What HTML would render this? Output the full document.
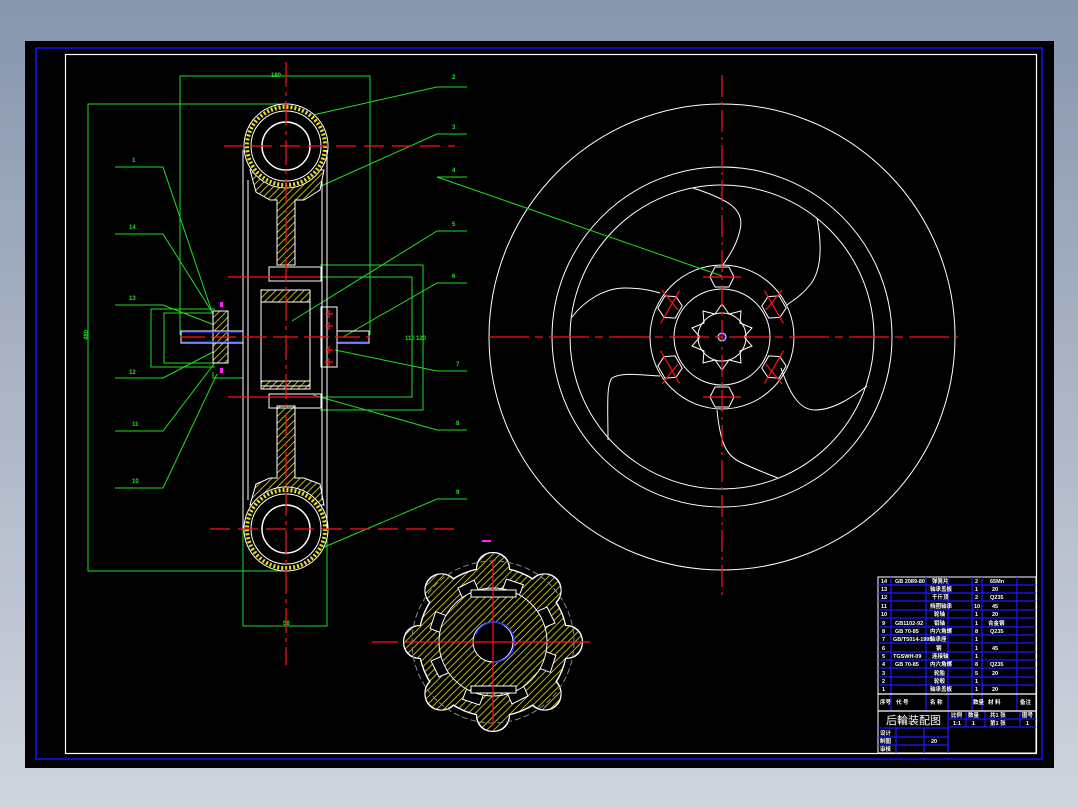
<!DOCTYPE html>
<html><head><meta charset="utf-8"><style>
html,body{margin:0;padding:0;}
body{width:1078px;height:808px;overflow:hidden;background:linear-gradient(#8796ad,#b4bccb 60%,#d0d4de);position:relative;font-family:"Liberation Sans","Noto Sans CJK SC",sans-serif;}
svg{position:absolute;left:0;top:0;}
</style></head><body>
<svg width="1078" height="808" viewBox="0 0 1078 808" xmlns="http://www.w3.org/2000/svg">
<defs>
<pattern id="h" width="5" height="5" patternUnits="userSpaceOnUse" patternTransform="rotate(45)">
<rect width="5" height="5" fill="#000"/><line x1="0" y1="0" x2="0" y2="5" stroke="#e8e020" stroke-width="1.6"/>
</pattern>
<filter id="ol" x="-10%" y="-10%" width="120%" height="120%">
<feMorphology operator="dilate" radius="1" in="SourceAlpha" result="d"/>
<feFlood flood-color="#fff" result="f"/>
<feComposite in="f" in2="d" operator="in" result="o"/>
<feMerge><feMergeNode in="o"/><feMergeNode in="SourceGraphic"/></feMerge>
</filter>
</defs>
<rect x="25" y="41" width="1029" height="727" fill="#000"/>
<rect x="36" y="48" width="1006" height="711" fill="none" stroke="#1010ff" stroke-width="1.5"/>
<rect x="65.5" y="54.5" width="971" height="699" fill="none" stroke="#fff" stroke-width="1.2"/>

<!-- ===== wheel ===== -->
<g fill="none" stroke="#fff" stroke-width="1">
<circle cx="722" cy="337" r="233"/>
<circle cx="722" cy="337" r="170"/>
<circle cx="722" cy="337" r="152"/>
<circle cx="722" cy="337" r="72"/>
<circle cx="722" cy="337" r="48"/>
<circle cx="722" cy="337" r="24"/>
<path d="M693,188 C730,200 745,210 740,230 C737,245 728,258 722,266"/>
<path d="M817,218 C822,245 822,270 810,285 C800,297 793,300 787,305"/>
<path d="M781,368 C790,395 800,410 815,410 C835,410 855,395 867,386"/>
<path d="M717,410 C720,440 725,455 740,462 C752,468 765,473 778,478"/>
<path d="M660,376 C640,375 622,372 612,378 C606,385 608,410 608,440"/>
<path d="M572,317 C585,300 605,288 625,288 C640,288 650,290 660,293"/>
<path d="M722,304 L729,314 L741,311 L740,323 L752,328 L744,337 L752,346 L740,351 L741,363 L729,360 L722,370 L715,360 L703,363 L704,351 L692,346 L700,337 L692,328 L704,323 L703,311 L715,314 Z"/>
<circle cx="722" cy="337" r="4"/>
<g id="hx"><polygon points="715,267 729,267 734,277 729,287 715,287 710,277"/></g>
<use href="#hx" transform="rotate(60 722 337)"/><use href="#hx" transform="rotate(120 722 337)"/>
<use href="#hx" transform="rotate(180 722 337)"/><use href="#hx" transform="rotate(240 722 337)"/>
<use href="#hx" transform="rotate(300 722 337)"/>
</g>
<circle cx="722" cy="337" r="3" fill="none" stroke="#2030ff"/>
<g stroke="#ff1010" stroke-width="1.2" fill="none">
<line x1="722" y1="75" x2="722" y2="600" stroke-dasharray="22,5,3,5"/>
<line x1="489" y1="337" x2="958" y2="337" stroke-dasharray="40,6,8,6"/>
<g id="rx"><line x1="703" y1="277" x2="741" y2="277"/></g>
<use href="#rx" transform="rotate(60 722 337)"/><use href="#rx" transform="rotate(120 722 337)"/>
<use href="#rx" transform="rotate(180 722 337)"/><use href="#rx" transform="rotate(240 722 337)"/>
<use href="#rx" transform="rotate(300 722 337)"/>
<line x1="662" y1="290" x2="678" y2="310"/><line x1="782" y1="290" x2="766" y2="310"/>
<line x1="662" y1="384" x2="678" y2="364"/><line x1="782" y1="384" x2="766" y2="364"/>
</g>

<!-- ===== left assembly ===== -->
<g fill="none" stroke="#20e020" stroke-width="1">
<path d="M180,335 V76 H370 V335"/>
<path d="M290,104 H88 V571 H290"/>
<path d="M243,529 V626 H327 V529"/>
<path d="M320,265 H423 V410 H320"/>
<path d="M320,277 H412 V397 H320"/>
<path d="M215,309 H151 V367 H215"/>
<path d="M215,313 H164 V363 H215"/>
<path d="M213,372 V378 H243"/>
<path d="M467,87 H437 L313,115"/>
<path d="M467,134 H437 L310,191"/>
<path d="M467,177 H437 L722,276"/>
<path d="M467,231 H437 L292,321"/>
<path d="M467,283 H437 L343,337"/>
<path d="M467,371 H437 L335,350"/>
<path d="M467,430 H437 L313,395"/>
<path d="M467,499 H437 L322,548"/>
<path d="M115,167 H163 L213,315"/>
<path d="M115,234 H163 L212,312"/>
<path d="M115,305 H163 L217,326"/>
<path d="M115,378 H163 L213,352"/>
<path d="M115,431 H163 L220,356"/>
<path d="M115,488 H163 L217,374"/>
</g>
<g fill="#20e020" font-size="6" font-weight="bold">
<text x="452" y="79">2</text><text x="452" y="129">3</text><text x="452" y="172">4</text>
<text x="452" y="226">5</text><text x="452" y="278">6</text><text x="456" y="366">7</text>
<text x="456" y="425">8</text><text x="456" y="494">9</text>
<text x="132" y="162">1</text><text x="129" y="229">14</text><text x="129" y="300">13</text>
<text x="129" y="374">12</text><text x="132" y="426">11</text><text x="132" y="483">10</text>
<text x="271" y="77">180</text><text x="283" y="625">58</text>
<text x="84" y="340" transform="rotate(-90 86 338)">480</text>
<text x="405" y="340">110</text><text x="416" y="340">120</text>
</g>
<g fill="url(#h)" stroke="#fff" stroke-width="1">
<path d="M250,170 L256,192 L270,200 L277,200 L277,265 L295,265 L295,200 L304,200 L320,190 L324,170 Z"/>
<path d="M250,505 L256,484 L270,478 L277,478 L277,406 L295,406 L295,478 L304,478 L320,484 L324,505 Z"/>
<rect x="261" y="290" width="49" height="12"/>
<rect x="261" y="381" width="49" height="8"/>
<rect x="213" y="311" width="15" height="52"/>
</g>
<g fill="#000" stroke="#fff" stroke-width="1">
<circle cx="286" cy="146" r="42"/>
<circle cx="286" cy="529" r="42"/>
</g>
<g fill="none">
<circle cx="286" cy="146" r="39" stroke="#e8e020" stroke-width="4" stroke-dasharray="2,2"/>
<circle cx="286" cy="529" r="39" stroke="#e8e020" stroke-width="4" stroke-dasharray="2,2"/>
<circle cx="286" cy="146" r="35" stroke="#fff"/><circle cx="286" cy="529" r="35" stroke="#fff"/>
<circle cx="286" cy="146" r="24" stroke="#fff" stroke-width="1.5"/>
<circle cx="286" cy="529" r="24" stroke="#fff" stroke-width="1.5"/>
</g>
<g fill="none" stroke="#fff" stroke-width="1">
<line x1="243" y1="150" x2="243" y2="529"/><line x1="327" y1="150" x2="327" y2="529"/>
<line x1="248" y1="180" x2="248" y2="500"/><line x1="322" y1="180" x2="322" y2="500"/>
<rect x="261" y="290" width="49" height="96"/>
<rect x="321" y="307" width="16" height="60"/>
<rect x="181" y="331" width="62" height="12"/>
<rect x="337" y="331" width="32" height="12"/>
<rect x="269" y="267" width="52" height="14"/><rect x="269" y="394" width="52" height="14"/>
</g>
<g stroke="#2030ff" stroke-width="1.2">
<line x1="182" y1="332" x2="242" y2="332"/><line x1="182" y1="342" x2="242" y2="342"/>
<line x1="338" y1="342" x2="368" y2="342"/>
</g>
<g stroke="#ff1010" stroke-width="1.2" fill="none">
<line x1="286" y1="62" x2="286" y2="665" stroke-dasharray="25,5,4,5"/>
<line x1="224" y1="146" x2="455" y2="146" stroke-dasharray="20,8"/>
<line x1="210" y1="529" x2="455" y2="529" stroke-dasharray="20,8"/>
<line x1="180" y1="337" x2="370" y2="337" stroke-dasharray="25,6"/>
<line x1="228" y1="277" x2="320" y2="277"/><line x1="228" y1="397" x2="320" y2="397"/>
<path d="M325,314 h8 M329,310 v8 M325,326 h8 M329,322 v8 M325,350 h8 M329,346 v8 M325,362 h8 M329,358 v8"/>
</g>
<rect x="220" y="302" width="3" height="5" fill="#ff20ff"/><rect x="220" y="368" width="3" height="5" fill="#ff20ff"/>

<!-- ===== bottom gear ===== -->
<g filter="url(#ol)">
<g fill="url(#h)">
<circle cx="493" cy="642" r="74"/>
<circle cx="493" cy="569" r="16"/><circle cx="544.6" cy="590.4" r="16"/>
<circle cx="566" cy="642" r="16"/><circle cx="544.6" cy="693.6" r="16"/>
<circle cx="493" cy="715" r="16"/><circle cx="441.4" cy="693.6" r="16"/>
<circle cx="420" cy="642" r="16"/><circle cx="441.4" cy="590.4" r="16"/>
</g>
</g>
<g stroke="#fff" stroke-width="1">
<g fill="#000">
<g id="sl"><polygon points="458,588 474,580 482,598 466,606"/></g>
<use href="#sl" transform="rotate(45 493 642)"/><use href="#sl" transform="rotate(90 493 642)"/>
<use href="#sl" transform="rotate(135 493 642)"/><use href="#sl" transform="rotate(180 493 642)"/>
<use href="#sl" transform="rotate(225 493 642)"/><use href="#sl" transform="rotate(270 493 642)"/>
<use href="#sl" transform="rotate(315 493 642)"/>
</g>
<circle cx="493" cy="642" r="54" fill="url(#h)"/>
<rect x="471" y="590" width="45" height="7" fill="#000"/>
<rect x="471" y="686" width="45" height="7" fill="#000"/>
<circle cx="493" cy="642" r="20" fill="#000"/>
</g>
<circle cx="493" cy="642" r="81" fill="none" stroke="#888" stroke-dasharray="6,3"/>
<path d="M476,634 A20,20 0 1 1 493,662" fill="none" stroke="#2030ff" stroke-width="1.5"/>
<g stroke="#ff1010" stroke-width="1.2">
<line x1="406" y1="642" x2="590" y2="642"/><line x1="372" y1="642" x2="398" y2="642"/>
<line x1="493" y1="560" x2="493" y2="725"/>
</g>
<rect x="482" y="540" width="9" height="2" fill="#ff20ff"/>

<!-- ===== title block ===== -->
<rect x="878" y="577" width="158" height="176" fill="none" stroke="#fff"/>
<g stroke="#1a1aff" stroke-width="1.2">
<line x1="878" y1="585" x2="1036" y2="585"/><line x1="878" y1="593" x2="1036" y2="593"/>
<line x1="878" y1="601" x2="1036" y2="601"/><line x1="878" y1="610" x2="1036" y2="610"/>
<line x1="878" y1="618" x2="1036" y2="618"/><line x1="878" y1="627" x2="1036" y2="627"/>
<line x1="878" y1="635" x2="1036" y2="635"/><line x1="878" y1="643" x2="1036" y2="643"/>
<line x1="878" y1="652" x2="1036" y2="652"/><line x1="878" y1="660" x2="1036" y2="660"/>
<line x1="878" y1="668" x2="1036" y2="668"/><line x1="878" y1="677" x2="1036" y2="677"/>
<line x1="878" y1="685" x2="1036" y2="685"/>
<line x1="891" y1="577" x2="891" y2="711"/><line x1="926" y1="577" x2="926" y2="711"/>
<line x1="948" y1="577" x2="948" y2="711"/><line x1="972" y1="577" x2="972" y2="711"/>
<line x1="982" y1="577" x2="982" y2="711"/><line x1="1017" y1="577" x2="1017" y2="711"/>
<line x1="878" y1="737" x2="948" y2="737"/><line x1="878" y1="745" x2="948" y2="745"/>
<line x1="896" y1="728" x2="896" y2="753"/><line x1="924" y1="728" x2="924" y2="753"/>
<line x1="948" y1="711" x2="948" y2="753"/>
<line x1="948" y1="719" x2="1036" y2="719"/><line x1="948" y1="727" x2="1036" y2="727"/>
<line x1="966" y1="711" x2="966" y2="727"/><line x1="985" y1="711" x2="985" y2="727"/>
<line x1="1020" y1="711" x2="1020" y2="727"/>
<line x1="878" y1="728" x2="948" y2="728"/>
</g>
<g stroke="#fff" stroke-width="1.2"><line x1="878" y1="694" x2="1036" y2="694"/><line x1="878" y1="711" x2="1036" y2="711"/></g>
<g fill="#fff" font-size="5.5" font-weight="bold">
<text x="881" y="583">14</text><text x="881" y="591">13</text><text x="881" y="599">12</text><text x="881" y="608">11</text>
<text x="881" y="616">10</text><text x="882" y="625">9</text><text x="882" y="633">8</text><text x="882" y="641">7</text>
<text x="882" y="650">6</text><text x="882" y="658">5</text><text x="882" y="666">4</text><text x="882" y="675">3</text>
<text x="882" y="683">2</text><text x="882" y="691">1</text>
<text x="895" y="583">GB 2089-80</text><text x="895" y="625">GB1102-92</text><text x="895" y="633">GB 70-85</text>
<text x="893" y="641">GB/T5014-1995</text><text x="893" y="658">TGSWH-09</text><text x="895" y="666">GB 70-85</text>
<text x="932" y="583">弹簧片</text><text x="930" y="591">轴承盖板</text><text x="932" y="599">千斤顶</text><text x="930" y="608">挡圈轴承</text>
<text x="934" y="616">轮轴</text><text x="934" y="625">销轴</text><text x="930" y="633">内六角螺</text><text x="930" y="641">轴承座</text>
<text x="936" y="650">钢</text><text x="932" y="658">连接轴</text><text x="930" y="666">内六角螺</text><text x="934" y="675">轮胎</text>
<text x="934" y="683">轮毂</text><text x="930" y="691">轴承盖板</text>
<text x="975" y="583">2</text><text x="975" y="591">1</text><text x="975" y="599">2</text><text x="974" y="608">10</text>
<text x="975" y="616">1</text><text x="975" y="625">1</text><text x="975" y="633">8</text><text x="975" y="641">1</text>
<text x="975" y="650">1</text><text x="975" y="658">1</text><text x="975" y="666">8</text><text x="975" y="675">5</text>
<text x="975" y="683">1</text><text x="975" y="691">1</text>
<text x="990" y="583">65Mn</text><text x="992" y="591">20</text><text x="990" y="599">Q235</text><text x="992" y="608">45</text>
<text x="992" y="616">20</text><text x="988" y="625">合金钢</text><text x="990" y="633">Q235</text><text x="992" y="650">45</text>
<text x="990" y="666">Q235</text><text x="992" y="675">20</text><text x="992" y="691">20</text>
<text x="880" y="704">序号</text><text x="896" y="704">代 号</text><text x="930" y="704">名 称</text>
<text x="973" y="704">数量</text><text x="988" y="704">材 料</text><text x="1020" y="704">备注</text>
<text x="951" y="717">比例</text><text x="968" y="717">数量</text><text x="990" y="717">共1 张</text><text x="1022" y="717">图号</text>
<text x="953" y="725">1:1</text><text x="972" y="725">1</text><text x="990" y="725">第1 张</text><text x="1026" y="725">1</text>
<text x="880" y="735">设计</text><text x="880" y="743">制图</text><text x="880" y="751">审核</text><text x="931" y="743">20</text>
</g>
<text x="886" y="724" fill="#fff" font-size="11">后輪装配图</text>
</svg>
</body></html>
